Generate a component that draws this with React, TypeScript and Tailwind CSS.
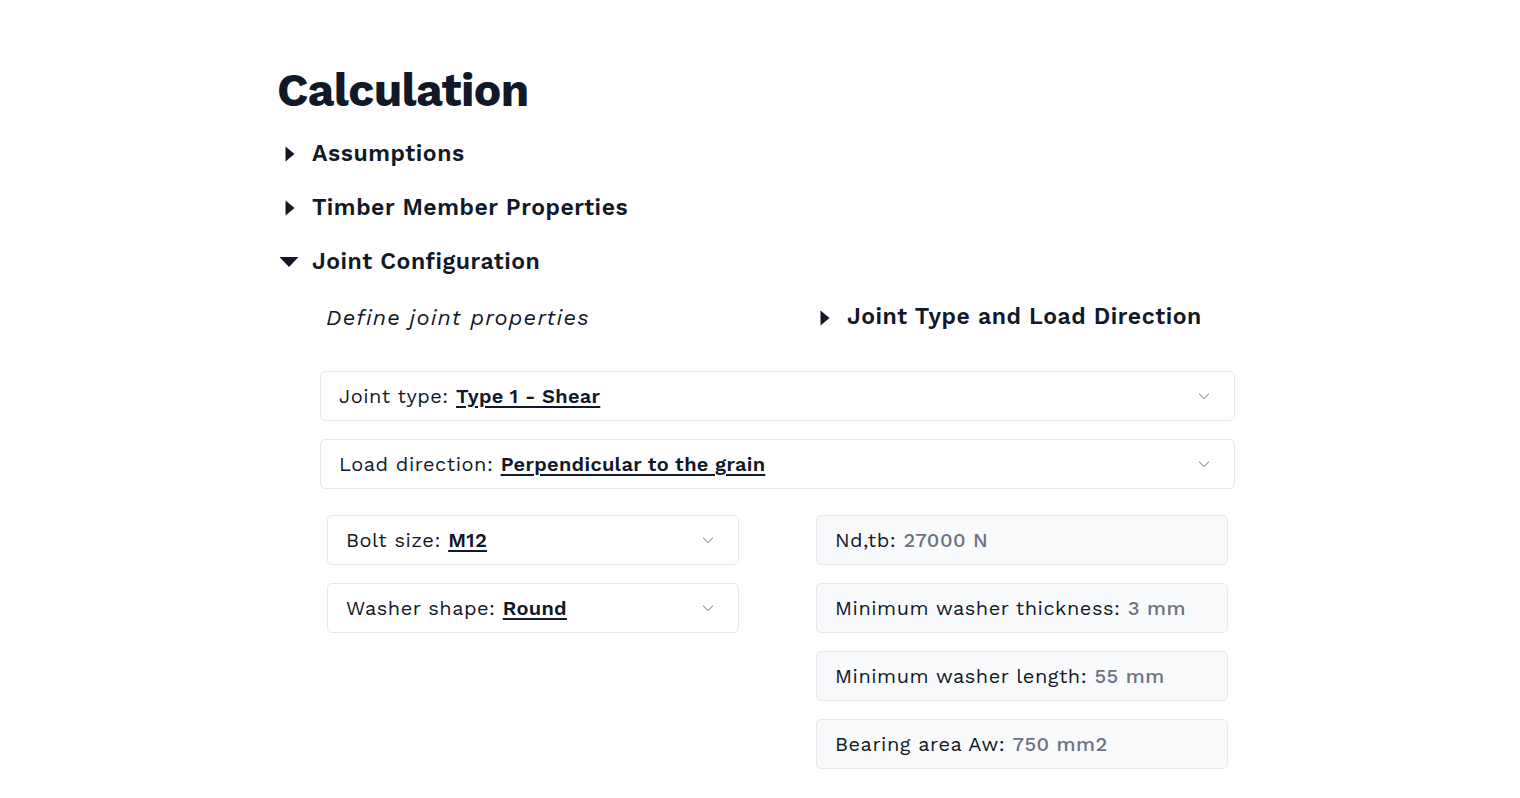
import React from "react";

const Chevron = () => (
  <svg width="16" height="16" viewBox="0 0 24 24" fill="none" stroke="#9ca3af" strokeWidth="1.6" strokeLinecap="round" strokeLinejoin="round">
    <path d="M5 9l7 7 7-7" />
  </svg>
);

const TriRight = () => (
  <svg width="10" height="16" viewBox="0 0 10 16"><path d="M0.5 0.5 L9.5 8 L0.5 15.5 Z" fill="#111827" /></svg>
);
const TriDown = () => (
  <svg width="20" height="12" viewBox="0 0 20 12"><path d="M0.5 1 L19.5 1 L10 11 Z" fill="#111827" /></svg>
);

function Select({ label, value, w }: { label: string; value: string; w: string }) {
  return (
    <div className={`${w} h-[50px] border border-[#e5e7eb] rounded-[5px] bg-white flex items-center justify-between pl-[18px] pr-[22px]`}>
      <span className="text-[20px] tracking-[0.5px] text-[#111827]">
        {label}: <span className="font-semibold tracking-[0.3px] underline underline-offset-[3px]">{value}</span>
      </span>
      <Chevron />
    </div>
  );
}

function Info({ label, value }: { label: string; value: string }) {
  return (
    <div className="w-[412px] h-[50px] border border-[#e5e7eb] rounded-[5px] bg-[#f9fafb] flex items-center pl-[18px]">
      <span className="text-[20px] tracking-[0.5px] text-[#111827]">
        {label}: <span className="text-[#6b7280] font-medium">{value}</span>
      </span>
    </div>
  );
}

function Head({ open, children }: { open?: boolean; children: React.ReactNode }) {
  return (
    <div className="flex items-center h-[54px]">
      <div className="w-[35px] flex items-center pl-[2px]">
        {open ? <TriDown /> : <div className="pl-[6px]"><TriRight /></div>}
      </div>
      <span className="text-[23px] font-semibold tracking-[0.55px] text-[#111827]">{children}</span>
    </div>
  );
}

export default function App() {
  return (
    <div className="min-h-[798px] bg-white" style={{ fontFamily: "'Work Sans', Inter, 'Noto Sans', sans-serif" }}>
      <div className="pl-[277px] pt-[62px]">
        <h1 className="text-[46px] font-bold text-[#111827] leading-[56px] tracking-[-0.6px]">Calculation</h1>
        <div className="mt-[9px]">
          <Head>Assumptions</Head>
          <Head>Timber Member Properties</Head>
          <Head open>Joint Configuration</Head>
        </div>
        <div className="pl-[43px] w-[957px]">
          <div className="flex items-center h-[57px]">
            <div className="w-[500px] pl-[6px] text-[22px] italic tracking-[1.2px] text-[#111827]">Define joint properties</div>
            <div className="flex items-center">
              <div className="w-[27px]"><TriRight /></div>
              <span className="text-[23px] font-semibold tracking-[0.55px] text-[#111827]">Joint Type and Load Direction</span>
            </div>
          </div>
          <div className="mt-[25px] flex flex-col gap-[18px]">
            <Select label="Joint type" value="Type 1 - Shear" w="w-[915px]" />
            <Select label="Load direction" value="Perpendicular to the grain" w="w-[915px]" />
          </div>
          <div className="mt-[26px] flex">
            <div className="pl-[7px] w-[496px] flex flex-col gap-[18px]">
              <Select label="Bolt size" value="M12" w="w-[412px]" />
              <Select label="Washer shape" value="Round" w="w-[412px]" />
            </div>
            <div className="flex flex-col gap-[18px]">
              <Info label="Nd,tb" value="27000 N" />
              <Info label="Minimum washer thickness" value="3 mm" />
              <Info label="Minimum washer length" value="55 mm" />
              <Info label="Bearing area Aw" value="750 mm2" />
            </div>
          </div>
        </div>
      </div>
    </div>
  );
}
